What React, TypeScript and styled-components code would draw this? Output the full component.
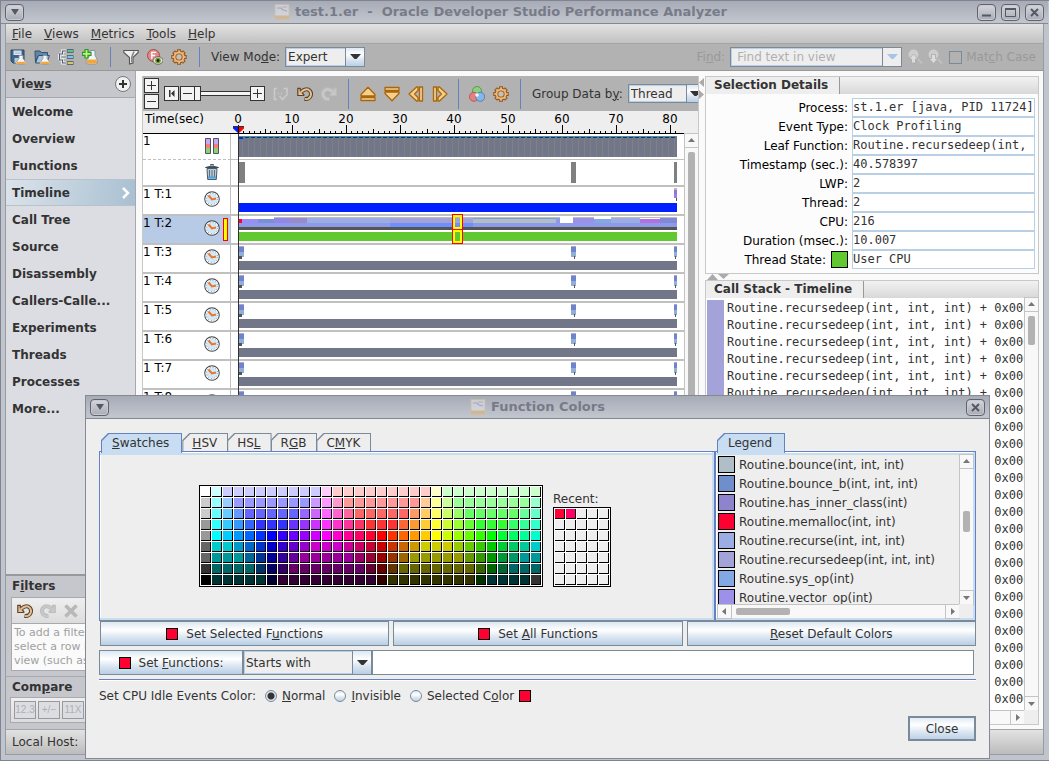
import React from 'react';
import styled, { createGlobalStyle, css } from 'styled-components';

const SANS = '"DejaVu Sans", "Noto Sans", sans-serif';
const MONO = '"DejaVu Sans Mono", "Liberation Mono", monospace';

const GlobalStyle = createGlobalStyle`
  * { box-sizing: border-box; }
  body { margin: 0; background: #c0c4cc; }
  button, input, select { font: inherit; color: inherit; margin: 0; border-radius: 0; }
  button { padding: 0; }
  ol, ul, dl, dd { margin: 0; padding: 0; list-style: none; }
`;

const metal = css`
  background: linear-gradient(#dde8f3, #ffffff 35%, #dbe6f1 65%, #b8cfe5);
`;

/* ---------- window chrome ---------- */

const Desktop = styled.div`
  position: relative;
  height: 100vh;
  min-height: 761px;
  overflow: hidden;
  display: flex;
  flex-direction: column;
  padding: 0 5px 5px 4px;
  background: #c0c4cc;
  border: solid #7f8490;
  border-width: 1px 0 1px 1px;
  font: 12px/16px ${SANS};
  color: #333;
`;

const TitleBar = styled.header`
  display: flex;
  align-items: center;
  gap: 4px;
  height: 23px;
  flex: none;
  margin: 0 -4px;
  padding: 0 4px;
  background: linear-gradient(#a7abb6, #c0c4cc 90%);
  border-bottom: 1px solid #85888f;
`;

const TitleText = styled.h1`
  flex: 1;
  display: flex;
  justify-content: center;
  align-items: center;
  gap: 5px;
  margin: 0;
  font-size: 13px;
  line-height: 16px;
  font-weight: bold;
  color: #777b88;
  white-space: pre;
`;

const ChromeButton = styled.button`
  width: 19px;
  height: 17px;
  display: flex;
  align-items: center;
  justify-content: center;
  border: 1px solid #5f636e;
  border-radius: 4px;
  background: linear-gradient(#d5d6db, #a9acb6);
  box-shadow: inset 0 0 0 1px #c8cad0;
  & + & { margin-left: 1px; }
`;

const Inner = styled.div`
  flex: 1;
  min-height: 0;
  display: flex;
  flex-direction: column;
  border: solid #999ba3;
  border-width: 0 1px 1px 1px;
  background: #fafafa;
`;

const MenuBar = styled.nav`
  display: flex;
  flex: none;
  align-items: center;
  gap: 12px;
  height: 20px;
  padding: 0 6px;
  background: linear-gradient(#e2e2e2, #c2c2c2);
  border-bottom: 1px solid #a5a5a5;
`;

const MenuButton = styled.button`
  border: 0;
  background: none;
`;

const ToolBar = styled.div`
  display: flex;
  flex: none;
  align-items: center;
  height: 27px;
  padding: 0 7px 0 4px;
  background: #b2b2b2;
  border-bottom: 1px solid #999;
`;

const IconGroup = styled.div<{ $gap?: number }>`
  display: flex;
  align-items: center;
  gap: ${p => p.$gap ?? 8}px;
`;

const IconButton = styled.button`
  width: 16px;
  height: 16px;
  border: 0;
  background: none;
  svg { display: block; }
`;

const Divider = styled.span<{ $h?: number; $before?: number; $after?: number }>`
  width: 1px;
  flex: none;
  height: ${p => p.$h ?? 20}px;
  margin: 0 ${p => p.$after ?? 12}px 0 ${p => p.$before ?? 12}px;
  background: #6382bf;
`;

const Spacer = styled.div`
  flex: 1;
`;

const Gap = styled.span<{ $w: number }>`
  flex: none;
  width: ${p => p.$w}px;
`;

const ComboBox = styled.span<{ $w: number; $h?: number }>`
  display: grid;
  flex: none;
  width: ${p => p.$w}px;
  height: ${p => p.$h ?? 20}px;
  > * { grid-area: 1 / 1; }
  select, input {
    appearance: none;
    width: 100%;
    height: 100%;
    padding: 0 20px 0 2px;
    border: 1px solid #7a8a99;
    outline: none;
    box-shadow: inset 0 0 0 1px #b8cfe5;
    background: #eee;
  }
`;

const ComboArrow = styled.span<{ $disabled?: boolean }>`
  justify-self: end;
  display: flex;
  align-items: center;
  justify-content: center;
  width: 20px;
  height: 100%;
  border: 1px solid #7a8a99;
  pointer-events: none;
  ${p => (p.$disabled ? 'background: #eee;' : metal)}
`;

const FindField = styled.label`
  display: flex;
  align-items: center;
  gap: 5px;
  color: #999;
  input::placeholder { color: #b0b0b0; opacity: 1; }
  input { padding-left: 6px; }
`;

const MatchCase = styled.label`
  display: flex;
  align-items: center;
  gap: 4px;
  margin-left: 6px;
  color: #999;
  input {
    appearance: none;
    width: 13px;
    height: 13px;
    border: 1px solid #7a8a99;
    background: #b2b2b2;
  }
`;

/* ---------- sidebar ---------- */

const Body = styled.div`
  flex: 1;
  min-height: 0;
  display: flex;
`;

const SideBar = styled.aside`
  flex: none;
  width: 130px;
  display: flex;
  flex-direction: column;
  background: #c6c7cd;
  border-right: 1px solid #a8a9ae;
`;

const SideHeading = styled.h2`
  display: flex;
  align-items: center;
  justify-content: space-between;
  margin: 0;
  padding: 0 4px 0 6px;
  height: 20px;
  font-size: 12px;
  line-height: 16px;
`;

const ViewsHeading = styled(SideHeading)`
  height: 27px;
  border-bottom: 1px solid #a8a9ae;
`;

const RoundButton = styled.button`
  width: 16px;
  height: 16px;
  border: 1px solid #777;
  border-radius: 50%;
  background: #f2f2f2;
  svg { display: block; }
`;

const ViewList = styled.ul`
  flex: 1;
  min-height: 0;
  overflow: hidden;
  background: #dcdde3;
  border-bottom: 2px solid #999;
`;

const ViewItem = styled.li<{ $active?: boolean }>`
  display: flex;
  align-items: center;
  justify-content: space-between;
  height: 27px;
  padding: 0 4px 0 6px;
  font-weight: bold;
  ${p => p.$active && css`
    background: linear-gradient(100deg, #dbe3ea, #a9c0d2);
    box-shadow: inset 0 1px #b9c2ca, inset 0 -1px #b9c2ca;
  `}
`;

const FilterBox = styled.div`
  height: 74px;
  margin: 1px 4px 5px 5px;
  border: 1px solid #a8a9ae;
  background: #fafafa;
`;

const FilterTools = styled.div`
  display: flex;
  align-items: center;
  gap: 7px;
  height: 26px;
  padding-left: 5px;
  background: linear-gradient(#efefef, #dcdcdc);
  border-bottom: 1px solid #a8a9ae;
`;

const FilterHint = styled.p`
  margin: 2px;
  font-size: 11px;
  line-height: 14px;
  white-space: pre;
  overflow: hidden;
  color: #a0a0a0;
`;

const CompareArea = styled.div`
  border-top: 1px solid #a8a9ae;
`;

const CompareBox = styled.div`
  display: flex;
  align-items: center;
  gap: 2px;
  height: 26px;
  margin: 0 4px 6px 4px;
  padding-left: 3px;
  border: 1px solid #a8a9ae;
  background: linear-gradient(#efefef, #dcdcdc);
`;

const CompareButton = styled.button`
  width: 22px;
  height: 18px;
  border: 1px solid #999;
  background: #dcdde3;
  color: #b0b0b0;
  font: 10px/14px "Liberation Sans", sans-serif;
`;

const StatusBar = styled.footer`
  display: flex;
  flex: none;
  align-items: center;
  height: 25px;
  padding: 0 6px;
  border-top: 1px solid #a5a5a5;
  background: linear-gradient(#e2e2e2, #bcbcbc);
`;

/* ---------- timeline ---------- */

const Timeline = styled.main`
  flex: 1;
  min-width: 0;
  margin: 5px 6px 4px 6px;
  overflow: hidden;
  border-left: 1px solid #c8c8c8;
  border-right: 1px solid #c8c8c8;
  display: flex;
  flex-direction: column;
  background: #fff;
`;

const TimelineTools = styled.div`
  display: flex;
  flex: none;
  align-items: center;
  height: 35px;
  padding-left: 1px;
  background: #b2b2b2;
  overflow: hidden;
  white-space: nowrap;
`;

const ZoomStack = styled.div`
  display: grid;
  gap: 1px;
  margin-right: 5px;
`;

const ZoomButton = styled.button`
  width: 15px;
  height: 15px;
  flex: none;
  border: 1px solid #333;
  background: #f4f4f4;
  svg { display: block; }
`;

const ZoomSlider = styled.input`
  appearance: none;
  width: 55px;
  height: 15px;
  margin: 0;
  background: linear-gradient(#333, #333) 0 5px / 100% 1px no-repeat,
    linear-gradient(#333, #333) 0 9px / 100% 1px no-repeat,
    linear-gradient(#f4f4f4, #f4f4f4) 0 6px / 100% 3px no-repeat;
  &::-webkit-slider-thumb {
    appearance: none;
    width: 6px;
    height: 15px;
    border: 1px solid #333;
    border-left: 0;
    background: #f4f4f4;
  }
`;

const Ruler = styled.div`
  flex: none;
  height: 23px;
  background: #eee;
  color: #000;
  display: grid;
`;

const RulerLabels = styled.div`
  grid-area: 1 / 1;
  display: flex;
  height: 16px;
  > * { flex: none; width: 54px; text-align: center; }
  > :first-child { width: 68px; text-align: left; padding-left: 2px; }
`;

const RulerTicks = styled.svg`
  grid-area: 1 / 1;
  display: block;
`;

const TrackArea = styled.div`
  flex: 1;
  min-height: 0;
  display: flex;
`;

const Tracks = styled.div`
  flex: 1;
  min-width: 0;
  overflow: hidden;
`;

const Track = styled.div<{ $h: number; $sep: number }>`
  display: flex;
  height: ${p => p.$h + p.$sep}px;
  border-bottom: ${p => p.$sep}px solid #c0c0c0;
  > svg { display: block; overflow: visible; }
`;

const TrackLabel = styled.div<{ $selected?: boolean; $dashed?: boolean }>`
  flex: none;
  display: flex;
  width: 88px;
  height: 100%;
  justify-content: space-between;
  padding-right: 2px;
  border-right: 1px solid #c0c0c0;
  color: #000;
  line-height: 14px;
  background: ${p => (p.$selected ? '#b8cbe6' : '#fff')};
  ${p => p.$dashed && 'height: calc(100% + 1px); border-bottom: 1px dashed #c0c0c0;'}
  > svg { margin: 4px 8px 0 auto; }
  > svg + i { margin-left: -5px; }
`;

const TrackGutter = styled.div`
  flex: none;
  width: 7px;
`;

const SelectedMark = styled.i`
  width: 5px;
  margin: 2px 0;
  border: 1px solid #f00;
  background: #ff0;
`;

/* ---------- scroll bars ---------- */

const Bar = styled.div<{ $horizontal?: boolean }>`
  flex: none;
  display: flex;
  background: #f8f8f8;
  border: 0 solid #c4c4c4;
  ${p => (p.$horizontal
    ? 'height: 14px; border-top-width: 1px;'
    : 'width: 14px; flex-direction: column; border-left-width: 1px;')}
`;

const BarArrow = styled.button`
  flex: none;
  width: 13px;
  height: 13px;
  border: 0;
  background: none;
  outline: 1px solid #c4c4c4;
  svg { display: block; }
`;

const BarTrack = styled.div<{ $horizontal?: boolean }>`
  flex: 1;
  padding: ${p => (p.$horizontal ? '3px 5px' : '5px 3px')};
`;

const Thumb = styled.div<{ $horizontal?: boolean; $size: number; $offset?: number }>`
  border-radius: 2px;
  background: #b2b2b2;
  ${p => (p.$horizontal
    ? `height: 7px; width: ${p.$size}px; margin-left: ${p.$offset ?? 0}px;`
    : `width: 7px; height: ${p.$size}px; margin-top: ${p.$offset ?? 0}px;`)}
`;

const ARROWS = {
  up: 'M6.5 4 L10 8 H3 Z',
  down: 'M3 5 H10 L6.5 9 Z',
  left: 'M4 6.5 L8 3 V10 Z',
  right: 'M5 3 L9 6.5 L5 10 Z',
};

function Arrow({ dir }: { dir: keyof typeof ARROWS }) {
  return (
    <BarArrow type="button" aria-label={`Scroll ${dir}`}>
      <svg width="13" height="13"><path d={ARROWS[dir]} fill="#777" /></svg>
    </BarArrow>
  );
}

function ScrollBar({ horizontal, size, offset }: { horizontal?: boolean; size: number; offset?: number }) {
  return (
    <Bar $horizontal={horizontal}>
      <Arrow dir={horizontal ? 'left' : 'up'} />
      <BarTrack $horizontal={horizontal}>
        <Thumb $horizontal={horizontal} $size={size} $offset={offset} />
      </BarTrack>
      <Arrow dir={horizontal ? 'right' : 'down'} />
    </Bar>
  );
}

/* ---------- right column ---------- */

const RightColumn = styled.section`
  flex: none;
  width: 338px;
  padding: 5px 4px 4px 0;
  display: flex;
  flex-direction: column;
`;

const Panel = styled.section<{ $grow?: boolean }>`
  border: 1px solid #c8c8c8;
  background: #fcfcfc;
  ${p => p.$grow && 'flex: 1; min-height: 0; display: flex; flex-direction: column;'}
`;

const PanelTab = styled.div`
  flex: none;
  height: 17px;
  background: linear-gradient(#f2f2f2, #d8d8d8);
  h2 {
    display: inline-block;
    height: 17px;
    margin: 0;
    padding: 0 11px 0 8px;
    font-size: 12px;
    line-height: 17px;
    background: #eee;
    border-right: 1px solid #999;
  }
`;

const Details = styled.dl`
  display: grid;
  grid-template-columns: 142px 1fr;
  column-gap: 4px;
  padding: 4px 3px 4px 0;
`;

const DetailLabel = styled.dt`
  display: flex;
  align-items: center;
  justify-content: flex-end;
  gap: 5px;
  color: #000;
`;

const DetailValue = styled.dd`
  height: 19px;
  overflow: hidden;
  border: 1px solid #b8cfe5;
  background: #fff;
  font: 12px/17px ${MONO};
  white-space: nowrap;
`;

const Swatch = styled.i<{ $color: string; $size?: number }>`
  flex: none;
  display: inline-block;
  width: ${p => p.$size ?? 17}px;
  height: ${p => p.$size ?? 17}px;
  border: 1px solid #000;
  background: ${p => p.$color};
`;

const SplitArrows = styled.svg`
  flex: none;
  display: block;
`;

const Splitter = styled.div`
  flex: none;
  width: 6px;
  margin: 5px 0 0 -6px;
`;

const StackArea = styled.div`
  flex: 1;
  min-height: 0;
  display: flex;
`;

const StackList = styled.ol`
  flex: 1;
  min-width: 0;
  padding: 2px 0 0 1px;
  overflow: hidden;
  background: #fff;
`;

const StackFrame = styled.li`
  height: 17px;
  padding-left: 3px;
  border-left: 17px solid #a3a2d9;
  font: 12px/17px ${MONO};
  white-space: nowrap;
`;

const ScrollCorner = styled.div`
  flex: none;
  display: flex;
  > :first-child { flex: 1; }
  > i { width: 14px; background: #eee; }
`;

/* ---------- dialog ---------- */

const Dialog = styled.div`
  position: absolute;
  left: 84px;
  right: 59px;
  top: 394px;
  border: 1px solid #858993;
  background: #eee;
`;

const DialogTitle = styled(TitleBar)`
  margin: 0;
`;

const DialogBody = styled.div`
  padding: 14px 13px 17px 13px;
`;

const Panes = styled.div`
  display: flex;
`;

const SwatchPane = styled.div`
  flex: 1;
  min-width: 0;
`;

const LegendPane = styled.div`
  flex: none;
  width: 261px;
`;

const TabRow = styled.div`
  display: flex;
  height: 18px;
  padding-left: 2px;
`;

const TAB_CLIP = 'polygon(7px 0, 100% 0, 100% 100%, 0 100%, 0 7px)';

const Tab = styled.button<{ $active?: boolean }>`
  position: relative;
  z-index: ${p => (p.$active ? 1 : 0)};
  flex: none;
  height: ${p => (p.$active ? 20 : 18)}px;
  margin-right: ${p => (p.$active ? 0 : -1)}px;
  padding: 1px 1px 0 1px;
  border: 0;
  background: ${p => (p.$active ? '#6382bf' : '#7a8a99')};
  clip-path: ${TAB_CLIP};
  > span {
    display: block;
    height: 100%;
    padding: 1px ${p => (p.$active ? 12 : 10)}px 0 ${p => (p.$active ? 10 : 9)}px;
    text-align: left;
    line-height: 16px;
    background: ${p => (p.$active ? '#c8ddf2' : '#eee')};
    clip-path: ${TAB_CLIP};
  }
`;

const Pane = styled.div`
  height: 170px;
  border: 1px solid #6382bf;
  border-bottom-color: #7a8a99;
  box-shadow: inset -2px -2px #c8ddf2, inset 0 1px #fff, inset 0 3px #c8ddf2, inset 1px 0 #fff;
`;

const ChooserPane = styled(Pane)`
  display: flex;
  justify-content: center;
  align-items: flex-end;
  gap: 10px;
  padding: 0 4px 33px 0;
`;

const SwatchGrid = styled.div<{ $cols: number }>`
  display: grid;
  grid-template-columns: repeat(${p => p.$cols}, 11px);
  grid-auto-rows: 11px;
  padding: 1px 0 0 1px;
  border: 1px solid #000;
  background: #fff;
`;

const SwatchCell = styled.button<{ $color: string }>`
  width: 10px;
  height: 10px;
  border: solid #000;
  border-width: 0 1px 1px 0;
  background: ${p => p.$color};
`;

const Recent = styled.div`
  display: grid;
`;

const LegendFrame = styled(Pane)`
  display: flex;
  flex-direction: column;
  padding: 3px 2px 2px 2px;
`;

const LegendMain = styled.div`
  flex: 1;
  min-height: 0;
  display: flex;
`;

const LegendList = styled.ul`
  flex: 1;
  min-width: 0;
  overflow: hidden;
`;

const LegendItem = styled.li`
  display: flex;
  align-items: center;
  gap: 4px;
  height: 19px;
  white-space: nowrap;
`;

const ActionRow = styled.div`
  display: flex;
  gap: 4px;
  padding-left: 1px;
`;

const PushButton = styled.button<{ $w?: number; $strong?: boolean }>`
  ${metal}
  display: flex;
  align-items: center;
  justify-content: center;
  gap: 8px;
  height: 25px;
  border: 1px solid #7a8a99;
  ${p => (p.$w ? `flex: none; width: ${p.$w}px;` : 'flex: 1;')}
  ${p => p.$strong && 'box-shadow: inset 0 0 0 1px #7a8a99;'}
`;

const FunctionRow = styled.div`
  display: flex;
  margin-top: 4px;
  padding: 0 2px 4px 0;
  border-bottom: 1px solid #6382bf;
  box-shadow: 0 1px #fff;
`;

const PatternInput = styled.input`
  flex: 1;
  min-width: 0;
  border: 1px solid #7a8a99;
  outline: none;
  background: #fff;
`;

const IdleRow = styled.fieldset`
  display: flex;
  align-items: center;
  gap: 9px;
  margin: 8px 0 0 0;
  padding: 0;
  border: 0;
`;

const Radio = styled.label`
  display: flex;
  align-items: center;
  gap: 5px;
  input {
    appearance: none;
    width: 12px;
    height: 12px;
    border: 1px solid #7a8a99;
    border-radius: 50%;
    ${metal}
  }
  input:checked {
    background: radial-gradient(circle, #333 3px, #dbe6f1 4px);
  }
`;

const CloseRow = styled.div`
  display: flex;
  justify-content: flex-end;
  margin-top: 12px;
`;

/* ---------- icons ---------- */

const Svg = ({ children, size = 16 }: { children: React.ReactNode; size?: number }) => (
  <svg width={size} height={size} viewBox="0 0 16 16" fill="none" aria-hidden>{children}</svg>
);

const Flask = ({ x = 0, y = 0 }) => (
  <g transform={`translate(${x} ${y})`}>
    <path d="M3 0h4v3l3 4q.5 2-1.500 2h-7Q-.5 9 0 7l3-4z" fill="#f3f7fb" stroke="#8a97a5" strokeWidth=".8" />
    <path d="M1 6.200h8l.6 1.600q-.2.800-1.200.800H1.600Q.6 8.600.5 7.800z" fill="#f3a63a" />
  </g>
);

const SaveIcon = () => (
  <Svg>
    <path d="M1 1h13v13H3l-2-2z" fill="#3f648b" stroke="#2b4663" />
    <path d="M3.500 1.500h8V6h-8z" fill="#dfeaf5" />
    <path d="M4.500 3h6M4.500 4.500h6" stroke="#9fb3c8" strokeWidth=".7" />
    <path d="M4.500 9h5v5h-5z" fill="#b7c9db" />
    <Flask x={6} y={6.500} />
  </Svg>
);

const OpenIcon = () => (
  <Svg>
    <path d="M1 3.500V2h5l1.500 1.500h6V7H4L1.500 13z" fill="#5f86ab" stroke="#34506d" />
    <path d="M1.500 14L4.500 6.500h11L12.500 14z" fill="#a8c4de" stroke="#34506d" />
    <Flask x={6} y={6.500} />
  </Svg>
);

const CompareIcon = () => (
  <Svg>
    <path d="M8 2H4.500v3M8 14H4.500v-3M1.500 5h4M1.500 11h4M1.500 5v6M4 8h4" stroke="#f2f2f2" strokeWidth="2.800" />
    <path d="M8 2H4.500v3H1.500v6h3v3H8M4 8h4" stroke="#4c5d70" strokeWidth="1.100" />
    <path d="M9 2h6.500M9 8h6.500M9 14h6.500" stroke="#38536f" strokeWidth="3.600" />
    <path d="M9.500 2h5.500" stroke="#5fd08a" strokeWidth="1.800" />
    <path d="M9.500 8h5.500" stroke="#8fd0e8" strokeWidth="1.800" />
    <path d="M9.500 14h5.500" stroke="#e7d86a" strokeWidth="1.800" />
  </Svg>
);

const AddExperimentIcon = () => (
  <Svg>
    <path d="M8 1.500h5v4.500l2.500 5.500q1 3.500-1.500 3.500H6q-2.500 0-2-3L8 6z" fill="#eef4fa" stroke="#8795a3" />
    <path d="M5.500 10.500h9l.8 2q-.2 2-1.600 2H6.300q-1.800 0-1.800-2z" fill="#f3a63a" />
    <path d="M3 .5h3v2.800h3v3H6V9H3V6.300H.3v-3H3z" fill="#b9f08f" stroke="#2f9a1a" strokeWidth="1.200" />
  </Svg>
);

const FilterIcon = () => (
  <Svg>
    <path d="M.8 1.500h14.400v2L10 8.500V14l-3.500 1V8.500L.8 3.500z" fill="#f0f0f0" stroke="#555" strokeWidth="1.100" />
    <path d="M11 2.500L8.800 8v5.500" stroke="#8a8a8a" strokeWidth="1.600" />
  </Svg>
);

const FunctionFilterIcon = () => (
  <Svg>
    <circle cx="6.500" cy="6.500" r="6" fill="#e58a8a" stroke="#b14545" />
    <path d="M4.800 10V3.300h4.400M4.800 6.500h3.400" stroke="#fff" strokeWidth="1.300" />
    <ellipse cx="11" cy="11.500" rx="5" ry="3.800" fill="#dfe7c8" stroke="#555" strokeWidth=".8" />
    <circle cx="11" cy="11.500" r="2.800" fill="#6c9a2a" />
    <circle cx="11" cy="11.500" r="1.300" fill="#111" />
  </Svg>
);

const GearIcon = () => (
  <Svg>
    {[0, 45, 90, 135].map(a => (
      <path key={a} d="M8 .3v15.400" stroke="#8a5420" strokeWidth="4" transform={`rotate(${a} 8 8)`} />
    ))}
    <circle cx="8" cy="8" r="6.300" fill="#8a5420" />
    {[0, 45, 90, 135].map(a => (
      <path key={a} d="M8 1.200v13.600" stroke="#e6aa66" strokeWidth="2.200" transform={`rotate(${a} 8 8)`} />
    ))}
    <circle cx="8" cy="8" r="5.400" fill="#efbb7c" />
    <circle cx="8" cy="8" r="3.600" fill="#8a5420" />
    <circle cx="8" cy="8" r="2.700" fill="#c9c0b5" />
  </Svg>
);

const HistoryIcon = ({ redo, disabled }: { redo?: boolean; disabled?: boolean }) => {
  const edge = disabled ? '#bdbdbd' : '#5e4326';
  const fill = disabled ? '#c9c9c9' : '#e2c39b';
  return (
    <Svg>
      <g transform={redo ? 'translate(16 0) scale(-1 1)' : undefined}>
        <path d="M4.500 5.500Q8 2.300 11.500 3.700Q15 5.800 13.700 9.800Q12 13.600 7.500 13" stroke={edge} strokeWidth="4" />
        <path d="M.8 2.300L3.300 2.300V5L6.800 8.500V9.500H.8z" fill={fill} stroke={edge} strokeWidth="1.200" />
        <path d="M3.800 6.200Q8 2.300 11.500 3.700Q15 5.800 13.700 9.800Q12 13.600 8 13" stroke={fill} strokeWidth="1.900" />
      </g>
    </Svg>
  );
};

const BracketIcon = () => (
  <Svg>
    <path d="M4 2.500H1.500v11H4M10.500 2.500H14V7M5 7.500h1M8 7.500h1M6.500 10l3 3.500 5.500-6" stroke="#cacaca" strokeWidth="1.600" />
  </Svg>
);

const RemoveIcon = () => (
  <Svg><path d="M2.500 2.500l11 11M13.500 2.500l-11 11" stroke="#b8b8b8" strokeWidth="3.600" /></Svg>
);

const StepIcon = ({ turn }: { turn: number }) => {
  const shape = turn === 0 || turn === 180
    ? <path d="M8 1.200L15 8.500V10H1V8.500zM1 11.500h14v3H1z" />
    : <path d="M1 8L8.500 1H10v3.500L6.500 8l3.500 3.500V15H8.500zM11.500 1h3v14h-3z" />;
  return (
    <Svg>
      <g fill="#f6cf8c" stroke="#a8670f" strokeWidth="1.300" strokeLinejoin="round" transform={turn >= 180 ? 'rotate(180 8 8)' : undefined}>{shape}</g>
    </Svg>
  );
};

const ColorsIcon = () => (
  <Svg>
    <circle cx="8" cy="5" r="4.500" fill="#8dcf80" stroke="#4b8f44" strokeWidth=".8" />
    <circle cx="4.900" cy="10.800" r="4.500" fill="#e98080" stroke="#a94e4e" strokeWidth=".8" />
    <circle cx="11.200" cy="10.800" r="4.500" fill="#85b8ea" stroke="#47769f" strokeWidth=".8" />
    <circle cx="8" cy="9" r="1.800" fill="#f4f4f4" />
  </Svg>
);

const FindIcon = ({ up }: { up?: boolean }) => (
  <Svg>
    <circle cx="6.500" cy="5.500" r="5" fill="#cecece" />
    <path d="M10 9l5 5.500" stroke="#bfbfbf" strokeWidth="2" />
    <path d={up ? 'M6.500 5l4.500 5H8.500v4h-4v-4H2z' : 'M4.500 5.500h4v4H11L6.500 14.500 2 9.500h2.500z'} fill="#dcdcdc" stroke="#aaa" strokeWidth=".8" />
  </Svg>
);

const AppIcon = () => (
  <Svg>
    <g opacity=".55">
      <path d="M1 .5h14v15H1z" fill="#e6e6ea" stroke="#d9c6a4" />
      <path d="M1 11.500h14v4H1z" fill="#e2b074" />
      <path d="M3 4h4l2 2 4 1" stroke="#8b9bd0" strokeWidth="1.200" />
      <path d="M8 3h5" stroke="#d98f8f" strokeWidth=".8" />
    </g>
  </Svg>
);

const ClockIcon = () => (
  <Svg>
    <circle cx="8" cy="8" r="7.200" fill="#d3e8f7" stroke="#4b4b4b" strokeWidth="1.200" />
    <circle cx="8" cy="8" r="6" stroke="#f6f9fb" strokeWidth="1.200" />
    <circle cx="8" cy="8" r="5.600" stroke="#6e8496" strokeWidth="1" strokeDasharray=".8 2.130" />
    <path d="M4.500 4.500L8 8.500l4-1" stroke="#e8762c" strokeWidth="2" />
  </Svg>
);

const TrashIcon = () => (
  <Svg>
    <path d="M3 4.500h10l-.7 11H3.700z" fill="#b9c9d6" stroke="#4a5a68" />
    <path d="M5.500 6v7M8 6v7M10.500 6v7" stroke="#5d7080" />
    <path d="M4 13.500h8" stroke="#4aa3e0" strokeWidth="2" />
    <path d="M1.500 3.500q6.500-3 13 0z" fill="#6f8292" stroke="#3d4c58" />
    <path d="M6.500 1.500V.6h3v.9" stroke="#3d4c58" />
  </Svg>
);

const CpuIcon = () => (
  <Svg>
    {[1, 9].map(x => (
      <g key={x}>
        <path d={`M${x + 0.500} .5h5v15h-5z`} fill="#c9a7f2" />
        <path d={`M${x + 0.500} 6h5v4h-5z`} fill="#f57f7f" />
        <path d={`M${x + 0.500} 10h5v5.500h-5z`} fill="#90cf72" />
        <path d={`M${x + 0.500} .5h5v15h-5z`} stroke="#4f5560" />
      </g>
    ))}
  </Svg>
);

const Caret = ({ color = '#333' }) => (
  <svg width="11" height="6"><path d="M0 0H11L6.500 5H4.500Z" fill={color} /></svg>
);

const PlusMinus = ({ plus }: { plus?: boolean }) => (
  <svg width="13" height="13"><path d={plus ? 'M2 6.500h9M6.500 2v9' : 'M2 6.500h9'} stroke="#333" /></svg>
);

/* ---------- data ---------- */

const SWATCH_ROWS = [
  'fff cff ccf*9 fcf fcc*9 ffc cfc*9',
  'ccc 9ff 9cf 99f*7 c9f f9f f9c f99*7 fc9 ff9 cf9 9f9*7 9fc',
  'ccc 6ff 6cf 69f 66f*5 96f c6f f6f f6c f69 f66*5 f96 fc6 ff6 cf6 9f6 6f6*5 6f9 6fc',
  '999 3ff 3cf 39f 36f 33f*3 63f 93f c3f f3f f3c f39 f36 f33*3 f63 f93 fc3 ff3 cf3 9f3 6f3 3f3*3 3f6 3f9 3fc',
  '999 0ff 0cf 09f 06f 03f 00f 30f 60f 90f c0f f0f f0c f09 f06 f03 f00 f30 f60 f90 fc0 ff0 cf0 9f0 6f0 3f0 0f0 0f3 0f6 0f9 0fc',
  '666 0cc*2 09c 06c 03c 00c 30c 60c 90c c0c*3 c09 c06 c03 c00 c30 c60 c90 cc0*3 9c0 6c0 3c0 0c0 0c3 0c6 0c9 0cc',
  '666 099*3 069 039 009 309 609 909*5 906 903 900 930 960 990*5 690 390 090 093 096 099*2',
  '333 066*4 036 006 306 606*7 603 600 630 660*7 360 060 063 066*3',
  '000 033*5 003 303*9 300 330*8 030 033*4 333',
];

const swatches = SWATCH_ROWS.flatMap(row =>
  row.split(' ').flatMap(run => {
    const [hex, count = '1'] = run.split('*');
    return Array<string>(Number(count)).fill(`#${hex}`);
  }),
);

const recent = ['#ff0033', '#ff0066', ...Array<string>(33).fill('#eee')];

const views = ['Welcome', 'Overview', 'Functions', 'Timeline', 'Call Tree', 'Source', 'Disassembly',
  'Callers-Calle...', 'Experiments', 'Threads', 'Processes', 'More...'];

const details = [
  ['Process:', 'st.1.er [java, PID 11724]'],
  ['Event Type:', 'Clock Profiling'],
  ['Leaf Function:', 'Routine.recursedeep(int, int, int)'],
  ['Timestamp (sec.):', '40.578397'],
  ['LWP:', '2'],
  ['Thread:', '2'],
  ['CPU:', '216'],
  ['Duration (msec.):', '10.007'],
  ['Thread State:', 'User CPU'],
];

const legend = [
  ['#b0bec8', 'Routine.bounce(int, int, int)'],
  ['#6f8fcc', 'Routine.bounce_b(int, int, int)'],
  ['#8e83cd', 'Routine.has_inner_class(int)'],
  ['#ff0033', 'Routine.memalloc(int, int)'],
  ['#9cade3', 'Routine.recurse(int, int, int)'],
  ['#a3a2d9', 'Routine.recursedeep(int, int, int)'],
  ['#82a9e4', 'Routine.sys_op(int)'],
  ['#9c90e8', 'Routine.vector_op(int)'],
];

/* [start, end, top, bottom, colour], relative to the start of the recording */
const threadTwo: [number, number, number, number, string][] = [
  [1, 4, 3, 7, '#ff0033'], [4, 20, 3, 7, '#9c8ef8'], [20, 36, 3, 7, '#7b8fd9'],
  [36, 322, 1, 2, '#bdbdbd'], [36, 52, 2, 7, '#9088e4'], [52, 69, 2, 7, '#9b8ac8'],
  [69, 152, 2, 7, '#9cade3'], [152, 235, 2, 7, '#a3a2d9'], [235, 318, 2, 7, '#b0bec5'],
  [235, 318, 2, 3, '#7b9bd9'], [318, 322, 2, 7, '#8c9be8'], [335, 356, 1, 2, '#bdbdbd'],
  [335, 356, 2, 7, '#9c90e8'], [356, 373, 3, 7, '#82a9e4'], [373, 439, 1, 2, '#bdbdbd'],
  [373, 402, 2, 7, '#9cade3'], [402, 422, 3, 7, '#b370e0'], [422, 439, 2, 7, '#8088d8'],
  [1, 152, 7, 11, '#8c9be8'], [152, 235, 7, 11, '#6d90ff'], [235, 439, 7, 11, '#8c9be8'],
  [0, 439, 11, 14, '#555'], [0, 439, 16, 25, '#60c830'],
];

const Rect = ({ at: [x1, x2, y1, y2, fill] }: { at: [number, number, number, number, string] }) => (
  <rect x={x1} y={y1} width={x2 - x1} height={y2 - y1} fill={fill} />
);

const StartLine = () => <path d="M.5 0V29" stroke="#333" />;

const Mn = ({ text, at }: { text: string; at: number }) => (
  <span>{text.slice(0, at)}<u>{text[at]}</u>{text.slice(at + 1)}</span>
);

function CpuChart() {
  return (
    <svg width="446" height="25">
      <Rect at={[0, 439, 2, 23, '#717788']} />
      {Array.from({ length: 73 }, (_, i) => <Rect key={i} at={[i * 6 + 4, i * 6 + 5, 4, 23, '#808080']} />)}
      <Rect at={[0, 439, 2, 3, '#55a045']} />
      <path d="M1 3.500H439" stroke="#0020ff" strokeDasharray="4 2" />
      <Rect at={[1, 5, 3, 5, '#0020ff']} />
      <StartLine />
    </svg>
  );
}

function GcChart() {
  return (
    <svg width="446" height="25">
      {[[0, 7], [333, 338], [436, 439]].map(([a, b]) => <Rect key={a} at={[a, b, 2, 23, '#808080']} />)}
      <StartLine />
    </svg>
  );
}

function ThreadChart({ id }: { id: number }) {
  return (
    <svg width="446" height="27">
      {id === 1 && (
        <>
          <Rect at={[436, 439, 1, 3, '#b5b5dd']} />
          <Rect at={[436, 439, 3, 7, '#a070d8']} />
          <Rect at={[436, 439, 7, 11, '#8c84ee']} />
          <Rect at={[438, 439, 11, 14, '#555']} />
          <Rect at={[0, 439, 16, 25, '#0020ff']} />
        </>
      )}
      {id === 2 && threadTwo.map((r, i) => <Rect key={i} at={r} />)}
      {id > 2 && (
        <>
          {[[1, 6], [333, 338], [436, 439]].map(([a, b]) => (
            <g key={a}>
              <Rect at={[a, b, 1, 2, '#b0a8c8']} />
              <Rect at={[a, b, 2, 7, '#6f84cf']} />
              <Rect at={[a, b, 7, 12, '#90aed6']} />
              <Rect at={[a === 1 ? a : b - 2, a === 1 ? a + 3 : b - 1, 11, 14, '#555']} />
            </g>
          ))}
          <Rect at={[0, 439, 16, 25, '#717788']} />
        </>
      )}
      <StartLine />
      {id === 2 && (
        <g>
          {[-1.5, 13.5].map(y => (
            <g key={y}>
              <rect x="214.500" y={y} width="10" height={y < 0 ? 15 : 14} stroke="#f00" fill="none" />
              <rect x="216" y={y + 1.500} width="7" height={y < 0 ? 12 : 11} stroke="#ff0" strokeWidth="2" fill="none" />
            </g>
          ))}
        </g>
      )}
    </svg>
  );
}

function TimeRuler() {
  const marks = Array.from({ length: 82 }, (_, s) => {
    const x = Math.round(95 + s * 5.4) + 0.5;
    const top = s % 10 === 0 ? 14 : s % 5 === 0 ? 18 : 20;
    return `M${x} ${top}V22`;
  }).join('');
  return (
    <Ruler>
      <RulerLabels>
        <span>Time(sec)</span>
        {[0, 10, 20, 30, 40, 50, 60, 70, 80].map(n => <span key={n}>{n}</span>)}
      </RulerLabels>
      <RulerTicks width="541" height="23">
        <path d={marks} stroke="#000" />
        <path d="M0 22.500H541" stroke="#000" />
        <path d="M90 15H95V22L90 17.500z" fill="#0020ff" />
        <path d="M96 15H101V17.500L96 22z" fill="#f00" />
        <path d="M90 15.500H101" stroke="#333" />
      </RulerTicks>
    </Ruler>
  );
}

function TimelineView() {
  return (
    <Timeline>
      <TimelineTools>
        <ZoomStack>
          <ZoomButton type="button" aria-label="Zoom in vertically"><PlusMinus plus /></ZoomButton>
          <ZoomButton type="button" aria-label="Zoom out vertically"><PlusMinus /></ZoomButton>
        </ZoomStack>
        <ZoomButton type="button" aria-label="Reset zoom">
          <svg width="13" height="13"><path d="M4 3h1.500v7H4zM9.500 3v7L6 6.500z" fill="#333" /></svg>
        </ZoomButton>
        <Gap $w={1} />
        <ZoomButton type="button" aria-label="Zoom out"><PlusMinus /></ZoomButton>
        <ZoomSlider type="range" aria-label="Zoom" min={0} max={100} defaultValue={0} />
        <ZoomButton type="button" aria-label="Zoom in"><PlusMinus plus /></ZoomButton>
        <Gap $w={8} />
        <IconGroup>
          <IconButton aria-label="Apply range"><BracketIcon /></IconButton>
          <IconButton aria-label="Back"><HistoryIcon /></IconButton>
          <IconButton aria-label="Forward"><HistoryIcon redo disabled /></IconButton>
        </IconGroup>
        <Divider $h={30} $before={11} $after={11} />
        <IconGroup>
          <IconButton aria-label="Previous row"><StepIcon turn={0} /></IconButton>
          <IconButton aria-label="Next row"><StepIcon turn={180} /></IconButton>
          <IconButton aria-label="Previous event"><StepIcon turn={90} /></IconButton>
          <IconButton aria-label="Next event"><StepIcon turn={270} /></IconButton>
        </IconGroup>
        <Divider $h={30} $before={10} $after={10} />
        <IconGroup>
          <IconButton aria-label="Function colors"><ColorsIcon /></IconButton>
          <IconButton aria-label="Settings"><GearIcon /></IconButton>
        </IconGroup>
        <Divider $h={30} $before={11} $after={11} />
        <label htmlFor="group"><Mn text="Group Data by:" at={12} /></label>
        <Gap $w={5} />
        <ComboBox $w={78} $h={19}>
          <select id="group"><option>Thread</option></select>
          <ComboArrow><Caret /></ComboArrow>
        </ComboBox>
      </TimelineTools>
      <TimeRuler />
      <TrackArea>
        <Tracks>
          <Track $h={25} $sep={1}>
            <TrackLabel $dashed>1<CpuIcon /></TrackLabel>
            <TrackGutter />
            <CpuChart />
          </Track>
          <Track $h={25} $sep={2}>
            <TrackLabel><TrashIcon /></TrackLabel>
            <TrackGutter />
            <GcChart />
          </Track>
          {[1, 2, 3, 4, 5, 6, 7, 8].map(id => (
            <Track key={id} $h={27} $sep={2}>
              <TrackLabel $selected={id === 2}>
                1 T:{id}
                <ClockIcon />
                {id === 2 && <SelectedMark />}
              </TrackLabel>
              <TrackGutter />
              <ThreadChart id={id} />
            </Track>
          ))}
        </Tracks>
        <ScrollBar size={300} />
      </TrackArea>
    </Timeline>
  );
}

function FunctionColors() {
  return (
    <Dialog role="dialog" aria-label="Function Colors">
      <DialogTitle>
        <ChromeButton type="button" aria-label="Menu"><svg width="8" height="6"><path d="M0 0H8L4 6Z" fill="#555966" /></svg></ChromeButton>
        <TitleText as="h2"><AppIcon />Function Colors</TitleText>
        <ChromeButton type="button" aria-label="Close window"><svg width="9" height="9"><path d="M1 1l7 7M8 1L1 8" stroke="#555966" strokeWidth="2" /></svg></ChromeButton>
      </DialogTitle>
      <DialogBody>
        <Panes>
          <SwatchPane>
            <TabRow role="tablist">
              <Tab role="tab" $active><Mn text="Swatches" at={0} /></Tab>
              <Tab role="tab"><Mn text="HSV" at={0} /></Tab>
              <Tab role="tab"><Mn text="HSL" at={2} /></Tab>
              <Tab role="tab"><Mn text="RGB" at={1} /></Tab>
              <Tab role="tab"><Mn text="CMYK" at={1} /></Tab>
            </TabRow>
            <ChooserPane>
              <SwatchGrid $cols={31}>
                {swatches.map((c, i) => <SwatchCell key={i} $color={c} aria-label={c} />)}
              </SwatchGrid>
              <Recent>
                Recent:
                <SwatchGrid $cols={5}>
                  {recent.map((c, i) => <SwatchCell key={i} $color={c} aria-label={`Recent ${i + 1}`} />)}
                </SwatchGrid>
              </Recent>
            </ChooserPane>
          </SwatchPane>
          <LegendPane>
            <TabRow role="tablist"><Tab role="tab" $active><span>Legend</span></Tab></TabRow>
            <LegendFrame>
              <LegendMain>
                <LegendList>
                  {legend.map(([color, name]) => (
                    <LegendItem key={name}><Swatch $color={color} />{name}</LegendItem>
                  ))}
                </LegendList>
                <ScrollBar size={21} offset={38} />
              </LegendMain>
              <ScrollCorner><ScrollBar horizontal size={54} /><i /></ScrollCorner>
            </LegendFrame>
          </LegendPane>
        </Panes>
        <ActionRow>
          <PushButton><Swatch $size={12} $color="#ff0033" /><Mn text="Set Selected Functions" at={14} /></PushButton>
          <PushButton><Swatch $size={12} $color="#ff0033" /><Mn text="Set All Functions" at={4} /></PushButton>
          <PushButton><Mn text="Reset Default Colors" at={0} /></PushButton>
        </ActionRow>
        <FunctionRow>
          <PushButton $w={144}><Swatch $size={12} $color="#ff0033" /><Mn text="Set Functions:" at={4} /></PushButton>
          <ComboBox $w={129} $h={25}>
            <select aria-label="Match"><option>Starts with</option></select>
            <ComboArrow><Caret /></ComboArrow>
          </ComboBox>
          <PatternInput aria-label="Function name" />
        </FunctionRow>
        <IdleRow>
          <span>Set CPU Idle Events Color:</span>
          <Radio><input type="radio" name="idle" defaultChecked /><Mn text="Normal" at={0} /></Radio>
          <Radio><input type="radio" name="idle" /><Mn text="Invisible" at={0} /></Radio>
          <Radio><input type="radio" name="idle" /><Mn text="Selected Color" at={10} /><Swatch $size={12} $color="#ff0033" /></Radio>
        </IdleRow>
        <CloseRow><PushButton $w={68} $strong>Close</PushButton></CloseRow>
      </DialogBody>
    </Dialog>
  );
}

export default function App() {
  return (
    <Desktop>
      <GlobalStyle />
      <TitleBar>
        <ChromeButton type="button" aria-label="Menu"><svg width="8" height="6"><path d="M0 0H8L4 6Z" fill="#555966" /></svg></ChromeButton>
        <TitleText><AppIcon />{'test.1.er  -  Oracle Developer Studio Performance Analyzer'}</TitleText>
        <ChromeButton type="button" aria-label="Minimize"><svg width="9" height="9"><path d="M0 7.500H9" stroke="#555966" strokeWidth="2" /></svg></ChromeButton>
        <ChromeButton type="button" aria-label="Maximize"><svg width="11" height="9"><path d="M.5 1h10v7.500H.5z" stroke="#555966" fill="none" /><path d="M0 1h11" stroke="#555966" strokeWidth="2" /></svg></ChromeButton>
        <ChromeButton type="button" aria-label="Close"><svg width="9" height="9"><path d="M1 1l7 7M8 1L1 8" stroke="#555966" strokeWidth="2" /></svg></ChromeButton>
      </TitleBar>
      <Inner>
        <MenuBar>
          {['File', 'Views', 'Metrics', 'Tools', 'Help'].map(m => (
            <MenuButton key={m} type="button"><Mn text={m} at={0} /></MenuButton>
          ))}
        </MenuBar>
        <ToolBar>
          <IconGroup>
            <IconButton aria-label="Save"><SaveIcon /></IconButton>
            <IconButton aria-label="Open"><OpenIcon /></IconButton>
            <IconButton aria-label="Compare"><CompareIcon /></IconButton>
            <IconButton aria-label="Add experiment"><AddExperimentIcon /></IconButton>
          </IconGroup>
          <Divider />
          <IconGroup>
            <IconButton aria-label="Filter"><FilterIcon /></IconButton>
            <IconButton aria-label="Function filter"><FunctionFilterIcon /></IconButton>
            <IconButton aria-label="Settings"><GearIcon /></IconButton>
          </IconGroup>
          <Divider $after={11} />
          <IconGroup $gap={5}>
            <label htmlFor="mode"><Mn text="View Mode:" at={7} /></label>
            <ComboBox $w={80}>
              <select id="mode"><option>Expert</option></select>
              <ComboArrow><Caret /></ComboArrow>
            </ComboBox>
          </IconGroup>
          <Spacer />
          <FindField>
            <Mn text="Find:" at={2} />
            <ComboBox $w={172}>
              <input placeholder="Find text in view" />
              <ComboArrow $disabled><Caret color="#a8c4e8" /></ComboArrow>
            </ComboBox>
          </FindField>
          <Gap $w={5} />
          <IconGroup $gap={4}>
            <IconButton aria-label="Find previous"><FindIcon up /></IconButton>
            <IconButton aria-label="Find next"><FindIcon /></IconButton>
          </IconGroup>
          <MatchCase><input type="checkbox" disabled /><Mn text="Match Case" at={3} /></MatchCase>
        </ToolBar>
        <Body>
          <SideBar>
            <ViewsHeading>
              <Mn text="Views" at={3} />
              <RoundButton aria-label="Add view"><svg width="14" height="14"><path d="M3 7h8M7 3v8" stroke="#333" strokeWidth="2" /></svg></RoundButton>
            </ViewsHeading>
            <ViewList>
              {views.map(v => (
                <ViewItem key={v} $active={v === 'Timeline'}>
                  {v}
                  {v === 'Timeline' && <svg width="10" height="12"><path d="M2 1l5 5-5 5" stroke="#fff" strokeWidth="2.500" fill="none" /></svg>}
                </ViewItem>
              ))}
            </ViewList>
            <SideHeading><Mn text="Filters" at={1} /></SideHeading>
            <FilterBox>
              <FilterTools>
                <IconButton aria-label="Undo filter"><HistoryIcon /></IconButton>
                <IconButton aria-label="Redo filter"><HistoryIcon redo disabled /></IconButton>
                <IconButton aria-label="Remove filters"><RemoveIcon /></IconButton>
              </FilterTools>
              <FilterHint>{'To add a filter,\nselect a row in a\nview (such as'}</FilterHint>
            </FilterBox>
            <CompareArea>
              <SideHeading><Mn text="Compare" at={3} /></SideHeading>
              <CompareBox>
                {['12.3', '+/−', '11X'].map(t => <CompareButton key={t} type="button">{t}</CompareButton>)}
              </CompareBox>
            </CompareArea>
          </SideBar>
          <TimelineView />
          <Splitter>
            <SplitArrows width="6" height="24"><path d="M5 2v9L0 6.500zM0 14v9l5-4.500z" fill="#aaa" /></SplitArrows>
          </Splitter>
          <RightColumn>
            <Panel>
              <PanelTab><h2>Selection Details</h2></PanelTab>
              <Details>
                {details.map(([label, value]) => (
                  <React.Fragment key={label}>
                    <DetailLabel>
                      {label}
                      {label === 'Thread State:' && <Swatch $color="#60c830" />}
                    </DetailLabel>
                    <DetailValue>{value}</DetailValue>
                  </React.Fragment>
                ))}
              </Details>
            </Panel>
            <SplitArrows width="30" height="6"><path d="M2 6h11L7.500 0zM13 0h11l-5.500 5z" fill="#aaa" /></SplitArrows>
            <Panel $grow>
              <PanelTab><h2>Call Stack - Timeline</h2></PanelTab>
              <StackArea>
                <StackList>
                  {Array.from({ length: 24 }, (_, i) => (
                    <StackFrame key={i}>Routine.recursedeep(int, int, int) + 0x000</StackFrame>
                  ))}
                </StackList>
                <ScrollBar size={29} />
              </StackArea>
              <ScrollCorner><ScrollBar horizontal size={150} /><i /></ScrollCorner>
            </Panel>
          </RightColumn>
        </Body>
        <StatusBar>Local Host:</StatusBar>
      </Inner>
      <FunctionColors />
    </Desktop>
  );
}
